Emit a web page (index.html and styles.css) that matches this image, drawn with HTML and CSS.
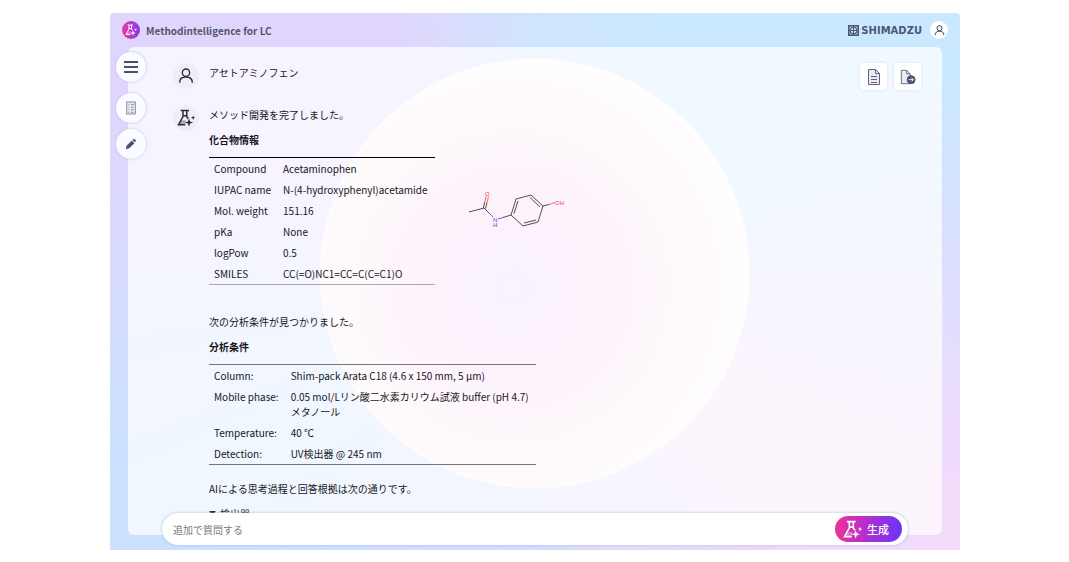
FILE: index.html
```html
<!DOCTYPE html>
<html lang="ja">
<head>
    <meta charset="UTF-8">
    <meta name="viewport" content="width=device-width, initial-scale=1.0">
    <title>Methodintelligence for LC</title>
    <link rel="stylesheet" href="styles.css">
</head>
<body>
    <!-- Shared icons -->
    <svg class="sprite" aria-hidden="true">
        <symbol id="icon-flask" viewBox="0 0 24 24">
            <path d="M5 2h11M8 2v8L2 21h9M13 2v8l2 3M8 9h5" />
            <path class="liquid" d="M6 15h6l-1 5H3z" />
            <path class="star" d="M16 12.500l1.400 4.100 4.100 1.400-4.100 1.400-1.400 4.100-1.400-4.100-4.100-1.400 4.100-1.400zM21.500 8.500l.8 2.200 2.200.8-2.200.8-.8 2.200-.8-2.200-2.200-.8 2.200-.8z" />
        </symbol>
        <symbol id="icon-user" viewBox="0 0 24 24">
            <circle cx="12" cy="7" r="5.500" />
            <path d="M2.500 22c0-6 4-8.500 9.500-8.500s9.500 2.500 9.500 8.500" />
        </symbol>
    </svg>

    <div class="app">
        <header class="header">
            <span class="app-icon"><svg><use href="#icon-flask" /></svg></span>
            <h1>Methodintelligence for LC</h1>
            <div class="brand">
                <svg class="brand-mark" viewBox="0 0 20 20">
                    <rect x="1.500" y="1.500" width="17" height="17" />
                    <circle cx="10" cy="10" r="6" />
                    <path d="M10 3v14M3 10h14" />
                </svg>
                <span>SHIMADZU</span>
            </div>
            <button type="button" class="account" aria-label="アカウント">
                <svg><use href="#icon-user" /></svg>
            </button>
        </header>

        <nav class="sidebar">
            <button type="button" class="round-btn menu-btn" aria-label="メニュー">
                <svg viewBox="0 0 16 16"><path d="M1 3h14M1 8h14M1 13h14" /></svg>
            </button>
            <button type="button" class="round-btn" aria-label="履歴">
                <svg class="list-icon" viewBox="0 0 14 16">
                    <rect x="2" y="1" width="10" height="14" />
                    <path d="M4 4h1M4 7h1M4 10h1M4 13h1M7 4h3M7 7h3M7 10h3M7 13h3" />
                </svg>
            </button>
            <button type="button" class="round-btn" aria-label="編集">
                <svg class="pencil-icon" viewBox="0 0 14 14">
                    <path d="M1 13l.8-4L8 3l3 3-6.200 6zM8.700 2.300l1-1q1-.7 2.200.5t.6 2.300l-.9.9z" />
                </svg>
            </button>
        </nav>

        <main class="panel">
            <div class="tools">
                <button type="button" class="tool-btn" aria-label="レポート">
                    <svg viewBox="0 0 16 18">
                        <path class="sheet" d="M2.500 1.500h7l4 4v11h-11z" />
                        <path d="M9.500 1.500v4h4M5 8.500h6M5 11.500h6M5 14.500h6" />
                    </svg>
                </button>
                <button type="button" class="tool-btn" aria-label="エクスポート">
                    <svg viewBox="0 0 18 18">
                        <path class="sheet" d="M1.500 1.500h6l4 4v11h-10z" />
                        <path d="M7.500 1.500v4h4" />
                        <circle class="badge" cx="12.500" cy="12" r="4.500" />
                        <path class="arrow" d="M10 12h5M13 10l2 2-2 2" />
                    </svg>
                </button>
            </div>

            <div class="messages">
                <div class="message">
                    <span class="avatar"><svg><use href="#icon-user" /></svg></span>
                    <div class="message-body">
                        <p>アセトアミノフェン</p>
                    </div>
                </div>

                <div class="message">
                    <span class="avatar flask"><svg><use href="#icon-flask" /></svg></span>
                    <div class="message-body">
                        <p>メソッド開発を完了しました。</p>
                        <h2>化合物情報</h2>
                        <div class="compound">
                            <table class="compound-table">
                                <tr><th scope="row">Compound</th><td>Acetaminophen</td></tr>
                                <tr><th scope="row">IUPAC name</th><td>N-(4-hydroxyphenyl)acetamide</td></tr>
                                <tr><th scope="row">Mol. weight</th><td>151.16</td></tr>
                                <tr><th scope="row">pKa</th><td>None</td></tr>
                                <tr><th scope="row">logPow</th><td>0.5</td></tr>
                                <tr><th scope="row">SMILES</th><td>CC(=O)NC1=CC=C(C=C1)O</td></tr>
                            </table>
                            <svg class="molecule" viewBox="0 0 100 42" role="img" aria-label="Acetaminophen">
                                <path d="M2 24l15-4M16.300 20l1.500-6M18.500 20.500l1.500-6M17 20l5 5M36 29.500l8-2.500" />
                                <path d="M44 27l5-16 15-4 12 11-5 16-15 4zM47 25.500l4-12.500M63 9.500l10 9.500M69 32l-12 3M76 18l6-1.500" />
                                <path class="red" d="M17.800 14l1.500-6M20 14.500l1.500-6M82 16.500l6-2" />
                                <path class="blue" d="M22 25l4 4M31 31l5-1.500" />
                                <text class="red" x="18" y="8">O</text>
                                <text class="red" x="88" y="17">OH</text>
                                <text class="blue" x="26" y="34">N</text>
                                <text class="blue" x="26" y="39">H</text>
                            </svg>
                        </div>
                        <p>次の分析条件が見つかりました。</p>
                        <h2>分析条件</h2>
                        <table class="condition-table">
                            <tr><th scope="row">Column:</th><td>Shim-pack Arata C18 (4.6 x 150 mm, 5 µm)</td></tr>
                            <tr><th scope="row">Mobile phase:</th><td>0.05 mol/Lリン酸二水素カリウム試液 buffer (pH 4.7)<br>メタノール</td></tr>
                            <tr><th scope="row">Temperature:</th><td>40 ℃</td></tr>
                            <tr><th scope="row">Detection:</th><td>UV検出器 @ 245 nm</td></tr>
                        </table>
                        <p>AIによる思考過程と回答根拠は次の通りです。</p>
                        <details open>
                            <summary>検出器</summary>
                        </details>
                    </div>
                </div>
            </div>
        </main>

        <form class="composer">
            <input type="text" placeholder="追加で質問する" aria-label="追加で質問する">
            <button type="button" class="generate-btn">
                <svg><use href="#icon-flask" /></svg>
                生成
            </button>
        </form>
    </div>
</body>
</html>
```
FILE: styles.css
```css
* {
    box-sizing: border-box;
}
body {
    margin: 0;
    padding: 13px 109px 12px 110px;
    background: #fff;
    color: #16161c;
    font-family: "Noto Sans CJK JP", "Noto Sans", sans-serif;
    font-size: 10px;
    line-height: 15px;
}
h1, h2, p {
    margin: 0;
}
button {
    display: flex;
    align-items: center;
    justify-content: center;
    padding: 0;
    border: none;
    font-family: inherit;
    cursor: pointer;
}
svg {
    fill: none;
    stroke: currentColor;
}
.sprite {
    position: absolute;
    width: 0;
    height: 0;
}
.star {
    fill: currentColor;
    stroke: none;
}
.liquid {
    fill: currentColor;
    fill-opacity: 0.35;
    stroke: none;
}

.app {
    position: relative;
    display: flex;
    flex-direction: column;
    height: calc(100vh - 25px);
    border-radius: 4px 4px 0 0;
    background: conic-gradient(#cfe5fe 0deg, #cae8ff 25deg, #cae8ff 64deg, #dcdffd 88deg, #f2dafb 116deg, #f2dafb 132deg, #d8dcfd 180deg, #c9e0ff 232deg, #c9e0ff 245deg, #e0d6fd 290deg, #e0d6fd 330deg, #cfe5fe 360deg);
}

/* Header */
.header {
    display: flex;
    align-items: center;
    height: 34px;
    padding: 0 12px;
}
.header h1 {
    margin-left: 6px;
    color: #55556a;
    font-size: 10px;
    font-weight: bold;
}
.app-icon {
    display: flex;
    align-items: center;
    justify-content: center;
    width: 18px;
    height: 18px;
    border-radius: 50%;
    background: linear-gradient(90deg, #ee3a9c, #8338f0);
    color: #fff;
}
.app-icon svg {
    width: 12px;
    height: 12px;
    stroke-width: 2;
}
.brand {
    display: flex;
    align-items: center;
    gap: 2px;
    margin-left: auto;
    color: #4b5874;
    font-family: "DejaVu Sans", sans-serif;
    font-size: 10px;
    font-weight: bold;
}
.brand-mark {
    width: 11px;
    height: 11px;
    stroke-width: 2;
}
.brand-mark rect {
    stroke-width: 3;
}
.account {
    width: 18px;
    height: 18px;
    margin-left: 8px;
    border-radius: 50%;
    background: #fff;
    color: #2b2b33;
}
.account svg {
    width: 11px;
    height: 11px;
    stroke-width: 2;
}

/* Floating buttons over the left edge of the panel */
.sidebar {
    position: absolute;
    top: 39px;
    left: 6px;
    z-index: 1;
    display: flex;
    flex-direction: column;
    gap: 6px;
}
.round-btn {
    width: 30px;
    height: 30px;
    border-radius: 50%;
    background: #fafcff;
    box-shadow: 0 0 3px #b4c2e0;
    color: #47536e;
}
.menu-btn {
    margin-bottom: 5px;
}
.round-btn svg {
    width: 16px;
    height: 16px;
    stroke-width: 2;
}
.round-btn .list-icon {
    width: 12px;
    height: 14px;
    stroke-width: 1;
    color: #737c90;
}
.list-icon rect {
    fill: #e9ebf1;
}
.round-btn .pencil-icon {
    width: 12px;
    height: 12px;
    fill: currentColor;
    stroke: none;
}

/* Panel */
.panel {
    position: relative;
    display: flex;
    flex: 1;
    flex-direction: column;
    min-height: 0;
    margin: 0 18px 15px;
    padding: 16px 20px 22px 45px;
    border-radius: 6px;
    background: rgba(255, 255, 255, 0.72);
}
.panel::before {
    content: "";
    position: absolute;
    top: 12px;
    left: 50%;
    height: 88%;
    aspect-ratio: 1;
    border-radius: 50%;
    background: radial-gradient(circle farthest-side at 45% 53%, #f9f3ff 0, #fdf2fc 38%, #fef9fb 70%, #fffdfd 100%);
    box-shadow: inset 0 0 4px #fff, 0 0 2px #fff;
    transform: translateX(-50%);
}
.tools {
    position: absolute;
    top: 16px;
    right: 21px;
    z-index: 1;
    display: flex;
    gap: 7px;
}
.tool-btn {
    width: 27px;
    height: 27px;
    border-radius: 4px;
    background: #fff;
    box-shadow: 0 0 3px #d4dced;
    color: #5c667e;
}
.tool-btn svg {
    width: 16px;
    height: 18px;
}
.sheet {
    fill: #e9ebf1;
}
.badge {
    fill: #47536e;
    stroke: #47536e;
}
.arrow {
    stroke: #fff;
}

/* Conversation */
.messages {
    position: relative;
    flex: 1;
    min-height: 0;
    overflow: hidden;
}
.message {
    display: flex;
    gap: 10px;
    margin-bottom: 15px;
}
.avatar {
    display: flex;
    flex: none;
    align-items: center;
    justify-content: center;
    width: 26px;
    height: 26px;
    border-radius: 50%;
    background: #eeeef9;
    color: #2b2b33;
}
.avatar svg {
    width: 16px;
    height: 16px;
    stroke-width: 2;
}
.avatar.flask svg {
    width: 18px;
    height: 18px;
}
.message-body {
    padding-top: 2px;
}
.message-body p,
.message-body h2 {
    margin-bottom: 10px;
}
.message-body h2 {
    font-size: 10px;
    font-weight: bold;
    line-height: 15px;
}
table {
    border-collapse: collapse;
    border-top: 1px solid #77757f;
    border-bottom: 1px solid #77757f;
}
th, td {
    padding: 3px 7px 3px 5px;
    font-weight: normal;
    text-align: left;
    vertical-align: top;
}
.compound {
    display: flex;
    align-items: flex-start;
    gap: 32px;
    margin-bottom: 29px;
}
.compound-table {
    border-top-color: #000;
    border-bottom-color: #aaa8b2;
}
.molecule {
    width: 100px;
    height: 42px;
    margin-top: 31px;
    overflow: visible;
    stroke: #222;
    stroke-width: 0.8;
}
.molecule .red {
    stroke: #f04848;
}
.molecule .blue {
    stroke: #4444e0;
}
.molecule text {
    font-family: "Liberation Sans", sans-serif;
    font-size: 6px;
}
.molecule text.red {
    fill: #f04848;
    stroke: none;
}
.molecule text.blue {
    fill: #4444e0;
    stroke: none;
}
.condition-table {
    margin-bottom: 16px;
}
summary {
    display: flex;
    align-items: center;
    gap: 4px;
    cursor: pointer;
}
summary::before {
    content: "";
    width: 7px;
    height: 6px;
    background: currentColor;
    clip-path: polygon(0 0, 100% 0, 50% 100%);
}

/* Question box */
.composer {
    position: absolute;
    right: 52px;
    bottom: 5px;
    left: 52px;
    z-index: 1;
    display: flex;
    height: 32px;
    padding: 3px 6px 3px 11px;
    border-radius: 16px;
    background: #fff;
    box-shadow: 0 0 3px #a9b8e6;
}
.composer input {
    flex: 1;
    padding: 0;
    border: none;
    outline: none;
    background: none;
    font-family: inherit;
    font-size: 10px;
}
.composer input::placeholder {
    color: #77777c;
}
.generate-btn {
    gap: 5px;
    width: 67px;
    padding-right: 5px;
    border-radius: 13px;
    background: linear-gradient(90deg, #ee3298, #b52fce 45%, #6a35f5);
    color: #fff;
    font-size: 11px;
    font-weight: 500;
}
.generate-btn svg {
    width: 19px;
    height: 19px;
    stroke-width: 2;
}
```
